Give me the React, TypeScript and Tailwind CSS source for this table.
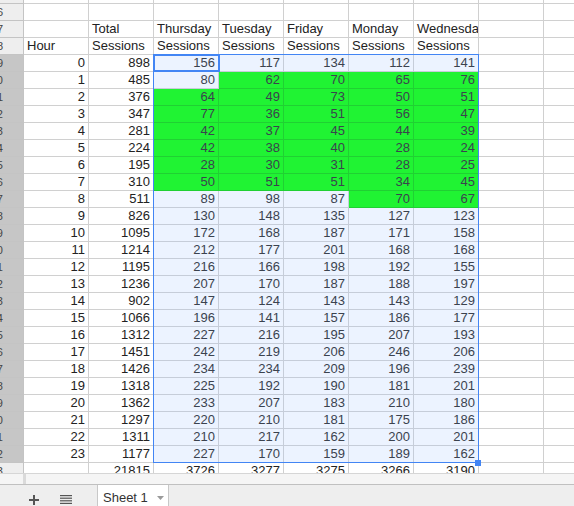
import { Fragment } from "react";

const days = ["Thursday", "Tuesday", "Friday", "Monday", "Wednesday"];

const totals = [898, 485, 376, 347, 281, 224, 195, 310, 511, 826, 1095, 1214, 1195, 1236, 902, 1066, 1312, 1451, 1426, 1318, 1362, 1297, 1311, 1177];

const byDay = [
  [156, 80, 64, 77, 42, 42, 28, 50, 89, 130, 172, 212, 216, 207, 147, 196, 227, 242, 234, 225, 233, 220, 210, 227],
  [117, 62, 49, 36, 37, 38, 30, 51, 98, 148, 168, 177, 166, 170, 124, 141, 216, 219, 234, 192, 207, 210, 217, 170],
  [134, 70, 73, 51, 45, 40, 31, 51, 87, 135, 187, 201, 198, 187, 143, 157, 195, 206, 209, 190, 183, 181, 162, 159],
  [112, 65, 50, 56, 44, 28, 28, 34, 70, 127, 171, 168, 192, 188, 143, 186, 207, 246, 196, 181, 210, 175, 200, 189],
  [141, 76, 51, 47, 39, 24, 25, 45, 67, 123, 158, 168, 155, 197, 129, 177, 193, 206, 239, 201, 180, 186, 201, 162],
];

type Cell = { text?: string | number; num?: boolean; green?: boolean };

const blank: Cell = {};

// builds every sheet row from 25 to 34
const buildRows = () => {
  const rows: { n: number; cells: Cell[]; picked?: boolean }[] = [];
  rows.push({ n: 25, cells: [] });
  rows.push({ n: 26, cells: [] });
  rows.push({
    n: 27,
    cells: [blank, { text: "Total" }, ...days.map((d) => ({ text: d }))],
  });
  rows.push({
    n: 28,
    cells: [{ text: "Hour" }, ...Array(6).fill({ text: "Sessions" })],
  });
  totals.forEach((t, h) => {
    rows.push({
      n: 29 + h,
      picked: true,
      cells: [
        { text: h, num: true },
        { text: t, num: true },
        ...byDay.map((col) => ({ text: col[h], num: true, green: col[h] < 80 })),
      ],
    });
  });
  rows.push({
    n: 53,
    cells: [blank, ...[21815, 3726, 3277, 3275, 3266, 3190].map((v) => ({ text: v, num: true }))],
  });
  rows.push({ n: 54, cells: [] });
  return rows;
};

const SheetCell = ({ cell }: { cell: Cell }) => (
  <div
    className={`w-[65px] h-[17px] shrink-0 border-r border-b overflow-hidden whitespace-nowrap leading-[16px] flex ${
      cell.num ? "justify-end pr-[3px]" : "justify-start pl-[3px]"
    } ${cell.green ? "bg-[#00ff00] border-[#00d400]" : "bg-white border-[#d0d0d0]"}`}
  >
    {cell.text}
  </div>
);

export default function App() {
  const rows = buildRows();

  return (
    <div className="w-[574px] h-[506px] overflow-hidden bg-white font-['Liberation_Sans',Arial,sans-serif] text-[13px] text-[#222]">
      {/* grid */}
      <div className="relative h-[473px] overflow-hidden">
        <div className="-mt-[13px]">
          {rows.map((row) => (
            <div key={row.n} className="flex">
              <div
                className={`w-[24px] h-[17px] shrink-0 border-r border-b border-[#c4c4c4] overflow-hidden flex justify-end pr-[20px] text-[11px] leading-[16px] text-[#444] ${
                  row.picked ? "bg-[#c6c6c6]" : "bg-[#eeeeee]"
                }`}
              >
                <span className="whitespace-nowrap">{row.n - 20}</span>
              </div>
              {Array.from({ length: 9 }).map((_, i) => (
                <Fragment key={i}>
                  <SheetCell cell={row.cells[i] ?? blank} />
                </Fragment>
              ))}
            </div>
          ))}
        </div>

        {/* selected range C9:G32 */}
        <div className="absolute left-[153px] top-[54px] w-[326px] h-[409px] border border-[#4285f4] bg-[rgba(160,195,255,0.2)] pointer-events-none" />
        <div className="absolute left-[153px] top-[54px] w-[67px] h-[18px] border-2 border-[#4285f4] pointer-events-none" />
        <div className="absolute left-[475px] top-[460px] w-[6px] h-[6px] bg-[#4285f4] pointer-events-none" />
      </div>

      {/* horizontal scroll strip */}
      <div className="h-[12px] border-t border-b border-t-[#d6d6d6] border-b-[#c0c0c0] bg-[#f5f5f5] flex">
        <div className="ml-[23px] w-[3px] bg-[#dadada]" />
      </div>

      {/* sheet tabs */}
      <div className="h-[21px] bg-[#eeeeee] flex items-stretch">
        <div className="w-[97px] flex items-center pt-[8px]">
          <svg className="ml-[29px]" width="10" height="10" viewBox="0 0 10 10">
            <rect x="4" y="0" width="2" height="10" fill="#555" />
            <rect x="0" y="4" width="10" height="2" fill="#555" />
          </svg>
          <svg className="ml-[21px]" width="12" height="9" viewBox="0 0 12 9">
            <rect x="0" y="0" width="12" height="1.2" fill="#555" />
            <rect x="0" y="2.6" width="12" height="1.2" fill="#555" />
            <rect x="0" y="5.2" width="12" height="1.2" fill="#555" />
            <rect x="0" y="7.8" width="12" height="1.2" fill="#555" />
          </svg>
        </div>
        <div className="w-[72px] bg-white border-l border-r border-[#c8c8c8] flex items-center pt-[4px] pl-[5px] text-[#333]">
          <span>Sheet 1</span>
          <svg className="ml-[9px] mt-[1px]" width="7" height="4" viewBox="0 0 7 4">
            <polygon points="0,0 7,0 3.5,4" fill="#9a9a9a" />
          </svg>
        </div>
      </div>
    </div>
  );
}
